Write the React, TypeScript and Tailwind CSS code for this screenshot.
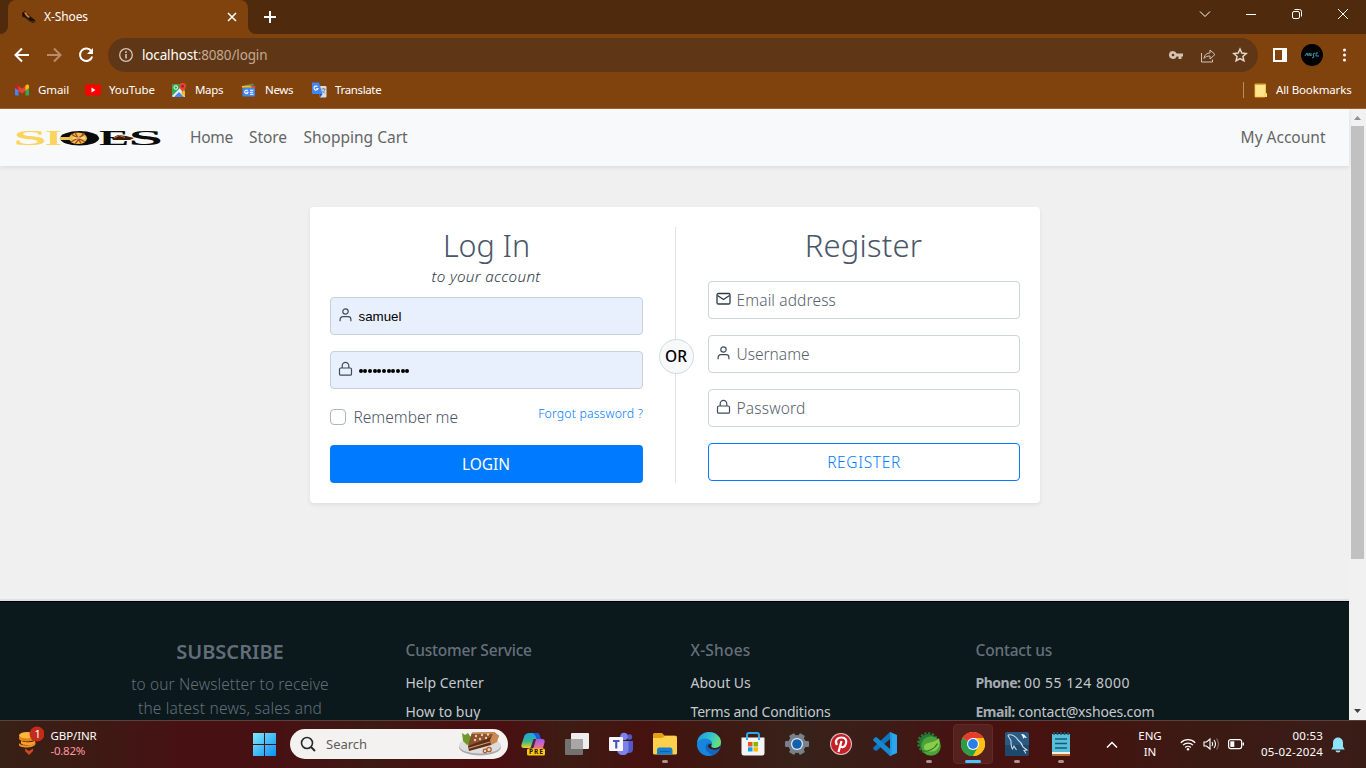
import type { ReactNode } from "react";

function TabStrip() {
  return (
    <div className="flex h-[34px] bg-[#4f2a0c] text-white">
      <div className="flex w-2 items-end bg-[#80430e]">
        <div className="h-full w-2 rounded-br-lg bg-[#4f2a0c]" />
      </div>
      <div className="flex w-[240px] items-center rounded-t-lg bg-[#80430e] pl-[14px] pr-[11px]">
        <svg width="14" height="13" viewBox="0 0 14 13">
          <path d="M0 2l3-2 3 3 3 3 4 3 .500 2-3 1-4-2-3-3-3-1z" fill="#16120f" />
          <path d="M2 1.500l2-.5 1.500 2.500L8 6 6.500 7 4 5z" fill="#d9741c" />
          <path d="M1 6l4 2 4 3 4-.5" stroke="#5d3a20" fill="none" />
        </svg>
        <span className="ml-[8px] grow text-[12px] leading-4 tracking-[-0.1px]">X-Shoes</span>
        <svg width="10" height="10" viewBox="0 0 10 10" stroke="#fff" strokeWidth="1.500">
          <path d="M1 1l8 8M9 1l-8 8" />
        </svg>
      </div>
      <div className="w-2 bg-[#80430e]">
        <div className="h-full w-2 rounded-bl-lg bg-[#4f2a0c]" />
      </div>
      <svg className="ml-[7px] mt-[10px]" width="14" height="14" viewBox="0 0 14 14" stroke="#fff" strokeWidth="2">
        <path d="M7 1v12M1 7h12" />
      </svg>
      <div className="ml-auto flex h-[28px] items-center gap-[34px] pr-[17px]">
        <svg width="12" height="12" viewBox="0 0 12 12" stroke="#fff" fill="none">
          <path d="M1 3.500l5 5 5-5" />
        </svg>
        <svg width="12" height="12" viewBox="0 0 12 12" stroke="#fff" fill="none">
          <path d="M1 6.500h10" />
        </svg>
        <svg width="12" height="12" viewBox="0 0 12 12" stroke="#fff" fill="none">
          <rect x="1.500" y="3.500" width="7" height="7" rx="1.500" />
          <path d="M3.500 1.500h5a2 2 0 0 1 2 2v5" />
        </svg>
        <svg width="12" height="12" viewBox="0 0 12 12" stroke="#fff" fill="none">
          <path d="M1 1l10 10M11 1L1 11" />
        </svg>
      </div>
    </div>
  );
}

function Toolbar() {
  return (
    <div className="flex h-[42px] items-center bg-[#80430e]">
      <svg className="ml-[14px]" width="16" height="16" viewBox="0 0 16 16" stroke="#fff" strokeWidth="2" fill="none">
        <path d="M15 8H2M8 1.500L1.500 8 8 14.500" />
      </svg>
      <svg className="ml-4" width="16" height="16" viewBox="0 0 16 16" stroke="#b98e66" strokeWidth="2" fill="none">
        <path d="M1 8h13M8 1.500L14.500 8 8 14.500" />
      </svg>
      <svg className="ml-4" width="16" height="16" viewBox="0 0 16 16" stroke="#fff" strokeWidth="2" fill="none">
        <path d="M13.300 4.200A6.200 6.200 0 1 0 14.200 9.500" />
        <path d="M15 1v6H9z" fill="#fff" stroke="none" />
      </svg>
      <div className="ml-[14px] flex h-[34px] w-[1150px] items-center rounded-full bg-[#5f3717] pl-[11px] pr-[10px]">
        <svg width="14" height="14" viewBox="0 0 14 14" stroke="#d3c6bb" fill="none">
          <circle cx="7" cy="7" r="6.300" strokeWidth="1.300" />
          <path d="M7 6v4.500M7 3.300v1.600" strokeWidth="1.600" />
        </svg>
        <span className="ml-[9px] text-[13.5px] leading-5 tracking-[-0.15px] text-[#c3a992]">
          <span className="text-white">localhost</span>:8080/login
        </span>
        <svg className="ml-auto" width="14" height="10" viewBox="0 0 14 10" fill="#d3c3b5">
          <path fillRule="evenodd" d="M4 1a4 4 0 1 0 3.700 5.500H9.500V9h3V6.500H14v-3H7.700A4 4 0 0 0 4 1zm0 2.700a1.300 1.300 0 1 1 0 2.600 1.300 1.300 0 0 1 0-2.600z" />
        </svg>
        <svg className="ml-[17px]" width="16" height="15" viewBox="0 0 16 15" stroke="#d3c3b5" fill="none">
          <path d="M1.500 5v9h11v-2.500M4 10.500c.5-4 3-5.500 6-5.500V2l5 4.500-5 4.500V8c-2.500 0-4.500.5-6 2.500z" />
        </svg>
        <svg className="ml-4" width="16" height="16" viewBox="0 0 16 16" stroke="#e3d7cd" strokeWidth="1.500" fill="none">
          <path d="M8 2l1.800 4 4.400.5-3.300 2.900 1 4.300L8 11.500l-3.900 2.200 1-4.300L1.800 6.500 6.200 6z" />
        </svg>
      </div>
      <svg className="ml-[15px]" width="14" height="14" viewBox="0 0 14 14">
        <path fillRule="evenodd" d="M0 0h14v14H0zM2 2v10h7V2z" fill="#fff" />
      </svg>
      <div className="ml-[14px] flex size-[22px] items-center justify-center rounded-full bg-black">
        <svg width="16" height="8" viewBox="0 0 16 8" stroke="#4aa3bd" fill="none" strokeWidth=".9">
          <path d="M1 5l2-3 1 3M5 5V2l2 3V2M11 2l-2 1 1 3-2 1M12 5V2h2M12 5h3" />
        </svg>
      </div>
      <svg className="ml-[19px]" width="4" height="14" viewBox="0 0 4 14" fill="#fff">
        <circle cx="2.500" cy="2" r="1.500" />
        <circle cx="2.500" cy="7" r="1.500" />
        <circle cx="2.500" cy="12" r="1.500" />
      </svg>
    </div>
  );
}

function Bookmark({ icon, children, className }: { icon: ReactNode; children: ReactNode; className: string }) {
  return (
    <div className={`flex shrink-0 items-center ${className}`}>
      {icon}
      <span className="ml-[8px] whitespace-nowrap">{children}</span>
    </div>
  );
}

function Bookmarks() {
  return (
    <div className="flex h-[33px] items-center border-b border-[#9a6233] bg-[#80430e] pb-[4px] pl-[14px] text-[11.5px] text-white">
      <Bookmark
        className="w-[71px] tracking-[-0.1px]"
        icon={
          <svg width="16" height="16" viewBox="0 0 16 16">
            <path d="M1 4v8.500q0 1 1 1h2.500V6.500z" fill="#4285f4" />
            <path d="M15 4v8.500q0 1-1 1h-2.500V6.500z" fill="#34a853" />
            <path d="M4 3.500l4 3.200 4-3.200v5L8 11.500l-4-3z" fill="#ea4335" />
            <path d="M1 4.500C1 2.300 3 2 4.500 3.500v5L1 6z" fill="#c5221f" />
            <path d="M15 4.500c0-2.200-2-2.500-3.500-1v5L15 6z" fill="#fbbc04" />
          </svg>
        }
      >
        Gmail
      </Bookmark>
      <Bookmark
        className="w-[86px] tracking-[-0.1px]"
        icon={
          <svg width="16" height="16" viewBox="0 0 16 16">
            <rect y="2.500" width="16" height="11" rx="2.500" fill="#f00" />
            <path d="M6.500 5.500l4 2.500-4 2.500z" fill="#fff" />
          </svg>
        }
      >
        YouTube
      </Bookmark>
      <Bookmark
        className="w-[70px] tracking-[-0.35px]"
        icon={
          <svg width="16" height="16" viewBox="0 0 16 16">
            <rect x="1" y="2" width="13" height="13" rx="1" fill="#34a853" />
            <path d="M1 14L10 5l4 5v5H2z" fill="#e8eaed" />
            <path d="M3 15l5-5 5 5z" fill="#4285f4" />
            <path d="M13 9l1 1v5l-4-4z" fill="#fbbc04" />
            <circle cx="4.800" cy="5.500" r="1.800" fill="none" stroke="#fff" />
            <path d="M11.500 1A3.300 3.300 0 0 1 15 4.300C15 7 12 8 11.700 11 11.300 8 8.200 7 8.200 4.300A3.300 3.300 0 0 1 11.500 1z" fill="#ea4335" />
            <circle cx="11.600" cy="4.300" r="1.200" fill="#8f2018" />
          </svg>
        }
      >
        Maps
      </Bookmark>
      <Bookmark
        className="w-[70px] tracking-[-0.35px]"
        icon={
          <svg width="16" height="16" viewBox="0 0 16 16">
            <path d="M3 3.500l9-2 1 4.500H3z" fill="#34a853" />
            <path d="M6 3l8.500 1-1 4H5z" fill="#ea4335" />
            <path d="M.5 4l8.500-.5 3 3.500H2z" fill="#fbbc04" />
            <rect x="1.500" y="5.500" width="12.500" height="9" rx="1" fill="#4285f4" />
            <path d="M7 8.300H4.800a1.700 1.700 0 1 0 2.300 1.900H5.300M9 8.300h3.500M9 10.200h3M9 12.200h3.500" stroke="#fff" strokeWidth="1.100" fill="none" />
          </svg>
        }
      >
        News
      </Bookmark>
      <Bookmark
        className="tracking-[-0.35px]"
        icon={
          <svg width="16" height="16" viewBox="0 0 16 16">
            <path d="M6 4h8.500q1 0 1 1v9.500q0 1-1 1H9z" fill="#dadce0" />
            <path d="M1 .5h7L11.500 12H2a1 1 0 0 1-1-1z" fill="#4285f4" />
            <path d="M8 12h3.500L9 15.500z" fill="#1a57c4" />
            <path d="M6.500 4.700A2 2 0 1 0 7 6.500H5.300" stroke="#fff" strokeWidth="1.100" fill="none" />
            <path d="M10.500 7h4M12.500 6v1M14 7c-.5 2-1.500 3-2.500 4M11 8.500l3 3" stroke="#687480" fill="none" strokeWidth=".8" />
          </svg>
        }
      >
        Translate
      </Bookmark>
      <div className="ml-auto mr-[10px] h-4 w-px bg-[#b98e66]" />
      <Bookmark
        className="mr-[14.5px] tracking-[-0.15px]"
        icon={
          <svg width="14" height="15" viewBox="0 0 14 15">
            <path d="M1 1.500h11V10h1v4H1z" fill="#ffe48a" />
            <path d="M1 1h10.500v9M1 1v13h10v-3.500h2" stroke="#efc13c" fill="none" strokeWidth=".8" />
          </svg>
        }
      >
        All Bookmarks
      </Bookmark>
    </div>
  );
}

function Logo() {
  return (
    <svg className="overflow-visible" width="150" height="20" viewBox="0 0 150 20" fontFamily="Liberation Serif, serif" fontWeight="bold" fontSize="21">
      <g fill="#fbd45c">
        <text transform="translate(-1.500 17) scale(2.850 1)">S</text>
        <text transform="translate(30 17) scale(2.100 1)">I</text>
      </g>
      <ellipse cx="64.500" cy="10.300" rx="19.500" ry="7.300" fill="#0b0b0b" />
      <path d="M45 9h13v3H45z" fill="#e9c650" />
      <ellipse cx="63" cy="10.300" rx="9" ry="5.800" fill="#f0bd4c" />
      <path d="M56 6l14 8M56 14l14-8M60 4.500l6 11M69 5l-9 11" stroke="#a34c1a" strokeWidth="1.400" />
      <path d="M58 10h12" stroke="#fff0c5" />
      <g fill="#0b0b0b">
        <text transform="translate(84 17) scale(2.150 1)">E</text>
        <text transform="translate(113.500 17) scale(2.950 1)">S</text>
      </g>
      <path d="M97 10l6-3 8 1 8 2-4 2H98z" fill="#3a1b0c" />
      <path d="M99 10l5-2.500 6 2" stroke="#d0702a" fill="none" />
    </svg>
  );
}

function Navbar() {
  return (
    <nav className="relative flex h-[57px] shrink-0 items-center bg-[#f8f9fa] pl-[15px] pr-[23.5px] text-[15.5px] leading-6 text-[#646566] shadow-[0_2px_4px_rgba(0,0,0,0.075)]">
      <Logo />
      <div className="ml-[25px] flex grow pb-px">
        <a className="w-[59px] tracking-[-0.25px]">Home</a>
        <a className="w-[54.5px] tracking-[-0.05px]">Store</a>
        <a>Shopping Cart</a>
        <a className="ml-auto">My Account</a>
      </div>
    </nav>
  );
}

const UserIcon = () => (
  <svg width="16" height="16" viewBox="0 0 16 16" stroke="#3e4b5b" strokeWidth="1.200" fill="none">
    <circle cx="7.500" cy="4.500" r="2.700" />
    <path d="M2.100 14.200v-1.700a2.800 2.800 0 0 1 2.800-2.800h5.200a2.800 2.800 0 0 1 2.800 2.800v1.700" />
  </svg>
);

const LockIcon = () => (
  <svg width="16" height="16" viewBox="0 0 16 16" stroke="#3e4b5b" strokeWidth="1.200" fill="none">
    <rect x="1.500" y="7" width="12" height="7.200" rx="1.300" />
    <path d="M4.200 7V4.700a3.300 3.300 0 0 1 6.600 0V7" />
  </svg>
);

const MailIcon = () => (
  <svg width="16" height="16" viewBox="0 0 16 16" stroke="#2c3a4c" strokeWidth="1.300" fill="none">
    <rect x="1" y="2.500" width="13" height="10.500" rx="1.300" />
    <path d="M1.500 4.500l6 4 6-4" />
  </svg>
);

function Field({ icon, children, filled }: { icon: ReactNode; children: ReactNode; filled?: boolean }) {
  return (
    <div
      className={`mb-4 flex h-[38px] items-center rounded-[4px] border pl-[7px] ${
        filled ? "border-[#c9cfdb] bg-[#e8f0fe]" : "border-[#ced4da] bg-white"
      }`}
    >
      <span className="pb-[3px]">{icon}</span>
      <span className="ml-[4.5px] flex items-center">{children}</span>
    </div>
  );
}

function LoginForm() {
  return (
    <div className="flex w-[313px] flex-col">
      <h2 className="h-[37px] text-center text-[30.5px] font-[330] leading-[36px] tracking-[-0.1px] text-[#4a5568]">Log In</h2>
      <p className="h-[33px] pr-px text-center text-[15.2px] font-[330] italic leading-[25px] tracking-[0.35px] text-[#2d3748]">to your account</p>
      <Field filled icon={<UserIcon />}>
        <span className="pt-px font-['Liberation_Sans',sans-serif] text-[13.33px] leading-5 text-black">samuel</span>
      </Field>
      <Field filled icon={<LockIcon />}>
        <span className="flex gap-[0.7px] pt-px">
          {Array.from({ length: 11 }, (_, i) => (
            <i key={i} className="size-[4px] rounded-full bg-black" />
          ))}
        </span>
      </Field>
      <div className="flex h-[40px] items-start">
        <span className="mt-[4px] size-4 rounded-[4px] border border-[#adb5bd] bg-white" />
        <span className="ml-[7.5px] text-[15.5px] font-[350] leading-6 tracking-[0px] text-[#4a5568]">Remember me</span>
        <a className="ml-auto text-[12.3px] font-[350] leading-[18px] tracking-[0.14px] text-[#007bff]">Forgot password ?</a>
      </div>
      <button className="h-[38px] rounded-[4px] bg-[#007bff] pr-px text-[15.5px] leading-[37px] text-white">LOGIN</button>
    </div>
  );
}

function Divider() {
  return (
    <div className="relative h-[256px] w-[65px]">
      <div className="ml-[32px] h-full w-px bg-[#dee2e6]" />
      <div className="absolute left-[16px] top-[112px] flex size-[35px] items-center justify-center rounded-full border border-[#d5d9dd] bg-[#f8f9fa] pr-px text-[15.5px] font-medium tracking-[0.1px] text-black">
        OR
      </div>
    </div>
  );
}

function RegisterForm() {
  const text = "text-[15.5px] font-[350] leading-6 text-[#56606b]";
  return (
    <div className="flex w-[312px] flex-col">
      <h2 className="h-[54px] pr-px text-center text-[31px] font-[330] leading-[36px] tracking-[0.2px] text-[#4a5568]">Register</h2>
      <Field icon={<MailIcon />}>
        <span className={`${text} pb-px tracking-[0.13px]`}>Email address</span>
      </Field>
      <Field icon={<UserIcon />}>
        <span className={`${text} pb-px`}>Username</span>
      </Field>
      <Field icon={<LockIcon />}>
        <span className={`${text} pb-px tracking-[0.18px]`}>Password</span>
      </Field>
      <button className="h-[38px] rounded-[4px] border border-[#007bff] text-[15.5px] font-[350] leading-[34px] tracking-[0.65px] text-[#007bff]">
        REGISTER
      </button>
    </div>
  );
}

function Footer() {
  const heading = "text-[15.5px] font-medium leading-6 text-[#66707a]";
  const link = "text-[14px] leading-[29px] text-[#c5c9cc]";
  return (
    <footer className="mt-auto h-[121px] shrink-0 border-t-2 border-[#d9e2e4] bg-[#0b181c]">
      <div className="flex h-full border-t border-black">
        <div className="ml-[119.5px] w-[221px] pt-[35px] text-center text-[#636e78]">
          <h5 className="text-[20px] font-semibold leading-[29px] tracking-[0px] text-[#636d78]">SUBSCRIBE</h5>
          <p className="pt-[6px] text-[15.5px] font-[350] leading-6 tracking-[0.1px]">to our Newsletter to receive</p>
          <p className="text-[15.5px] font-[350] leading-6 tracking-[0.2px]">the latest news, sales and</p>
        </div>
        <div className="ml-[65px] w-[285px] pt-[35.5px]">
          <h6 className={`${heading} tracking-[-0.2px]`}>Customer Service</h6>
          <div className="pt-[6.5px]">
            <p className={link}>Help Center</p>
            <p className={link}>How to buy</p>
          </div>
        </div>
        <div className="w-[285px] pt-[35.5px]">
          <h6 className={`${heading} tracking-[0.2px]`}>X-Shoes</h6>
          <div className="pt-[6.5px]">
            <p className={link}>About Us</p>
            <p className={`${link} tracking-[-0.17px]`}>Terms and Conditions</p>
          </div>
        </div>
        <div className="w-[285px] pt-[35.5px]">
          <h6 className={`${heading} tracking-[-0.2px]`}>Contact us</h6>
          <div className="pt-[6.5px]">
            <p className={link}>
              <b className="tracking-[-0.5px] text-[#a5abb0]">Phone:</b>
              <span className="ml-[3.5px] tracking-[0.5px]">00 55 124 8000</span>
            </p>
            <p className={link}>
              <b className="tracking-[-0.5px] text-[#a5abb0]">Email:</b>
              <span className="ml-[3.5px] tracking-[-0.15px]">contact@xshoes.com</span>
            </p>
          </div>
        </div>
      </div>
    </footer>
  );
}

function Scrollbar() {
  return (
    <div className="flex w-[17px] flex-col items-center bg-[#f1f1f1]">
      <svg width="17" height="17" viewBox="0 0 17 17">
        <path d="M5 11h7L8.500 7z" fill="#8f8f8f" />
      </svg>
      <div className="h-[433px] w-[13px] bg-[#c1c1c1]" />
      <svg className="mt-auto" width="17" height="17" viewBox="0 0 17 17">
        <path d="M5 6h7l-3.500 4z" fill="#404040" />
      </svg>
    </div>
  );
}

function Slot({ children, state }: { children: ReactNode; state?: "open" | "active" }) {
  return (
    <div className={`flex h-[40px] w-[40px] flex-col items-center rounded-[4px] ${state === "active" ? "border border-[#5f2b27] bg-[#54211f] pt-[7px]" : "pt-2"}`}>
      <svg width="24" height="24" viewBox="0 0 24 24">
        {children}
      </svg>
      {state === "open" && <i className="mt-[4px] h-[3px] w-[6px] rounded-full bg-[#a8928e]" />}
      {state === "active" && <i className="mt-[4px] h-[3px] w-4 rounded-full bg-[#4cc2ff]" />}
    </div>
  );
}

function TaskIcons() {
  return (
    <div className="ml-[5px] flex gap-1">
      <Slot>
        <defs>
          <linearGradient id="cpA" x1="0" y1="0" x2="0" y2="1">
            <stop stopColor="#1ba5e8" />
            <stop offset=".55" stopColor="#37b58f" />
            <stop offset="1" stopColor="#eed321" />
          </linearGradient>
          <linearGradient id="cpB" x1="0" y1="0" x2="0" y2="1">
            <stop stopColor="#a457f5" />
            <stop offset="1" stopColor="#ff7b6b" />
          </linearGradient>
        </defs>
        <path d="M15 7h6c2.500 0 3 1.500 2.500 3.500L22 16c-.5 1.500-1.500 2-3 2h-8z" fill="url(#cpB)" />
        <path d="M8 1h8c2 0 2.500 2 3 4l.7 2h-4.200c-2 0-3 3-4 6-.5 2-1 3-2.500 3H3c-2.500 0-3-1.500-2.500-3.500l3-9C4.500 2 6 1 8 1z" fill="url(#cpA)" />
        <path d="M12 1h4c2 0 2.500 2 3 4l.7 2h-4.200l-1-3z" fill="#1b5bd5" />
        <path d="M12.500 7h2.500l-2.500 9H9.500z" fill="#4a2a4a" />
        <rect x="6" y="16.500" width="18" height="7" rx="1.500" fill="#ffc814" />
        <text x="8" y="22.300" fontFamily="Noto Sans, sans-serif" fontSize="6.500" fontWeight="bold" fill="#1d1608" textLength="14">PRE</text>
      </Slot>
      <Slot>
        <rect x="6" y="1" width="18" height="16" rx="1" fill="#eee" />
        <rect x="0" y="7" width="18" height="16" rx="1" fill="#737271" />
        <path d="M6 7h12v10H6z" fill="#a9a7a6" />
      </Slot>
      <Slot>
        <circle cx="20.500" cy="5" r="2.700" fill="#5059c9" />
        <path d="M16 9h8v8a4 4 0 0 1-4 4h-3z" fill="#5059c9" />
        <circle cx="15" cy="4.500" r="3.800" fill="#7b83eb" />
        <path d="M8 9h11.500v8c0 4-2 6-5.500 6s-6-2-6-6z" fill="#7b83eb" />
        <rect x="0" y="5" width="14" height="14" rx="1" fill="#f7f7fb" />
        <path d="M4 8h6.500v2H8.300v6.500H6.200V10H4z" fill="#4b53bc" />
      </Slot>
      <Slot state="open">
        <path d="M0 2.500Q0 1 1.500 1H9l2.500 2.500H22Q24 3.500 24 5v5H0z" fill="#e0a112" />
        <path d="M0 6h9l3-2h10q2 0 2 2v15.500q0 1-1.500 1H1.500Q0 22.500 0 21z" fill="#fcd04c" />
        <path d="M4 22.500V18q0-2.500 2-2.500h11.500q2 0 2 2.500v4.500z" fill="#1580d0" />
        <path d="M7 19.500h10" stroke="#0c5fa6" />
      </Slot>
      <Slot>
        <defs>
          <linearGradient id="edgeTop" x1="0" x2="1" y1="0" y2=".4">
            <stop stopColor="#1697e0" />
            <stop offset=".6" stopColor="#36c2cf" />
            <stop offset="1" stopColor="#64e07b" />
          </linearGradient>
        </defs>
        <circle cx="12" cy="12" r="12" fill="#1267bd" />
        <path d="M0 11C1 4 6 0 12 0c7 0 12 5 12 10 0 4-3 6-6 6-2.500 0-4-1-3.500-2.500C16 11 14 7 9 7c-4 0-8 2-9 4z" fill="url(#edgeTop)" />
        <path d="M0 12c.5-3 4-5.500 8-5.500 5 0 7 4 6.500 6-1-2-6-2-6 2.500 0 4 3.500 6.500 7 8C7 26 0 20 0 12z" fill="#1686dc" />
        <path d="M14.500 12.500c-.7 1.500-1 3.500 3.500 3.500 2 0 4-.7 5.300-2 .3 1-.3 2-1.300 2.800-5 2-11 .2-11-2.800.5-2 2.500-2.500 3.500-1.500z" fill="#3b1b18" />
      </Slot>
      <Slot>
        <path d="M6 6V3q0-2 2-2h8q2 0 2 2v3" stroke="#29a8ec" strokeWidth="2" fill="none" />
        <path d="M.5 5.500h23V21q0 2.500-2.500 2.500H3Q.5 23.500.5 21z" fill="#f4f4f6" />
        <path d="M7 10h4.500v4.500H7z" fill="#f25022" />
        <path d="M12.500 10H17v4.500h-4.500z" fill="#7fba00" />
        <path d="M7 15.300h4.500v4.200H7z" fill="#00a4ef" />
        <path d="M12.500 15.300H17v4.200h-4.500z" fill="#ffb900" />
        <path d="M6 5.500V8M18 5.500V8" stroke="#29a8ec" strokeWidth="2" />
      </Slot>
      <Slot>
        <g fill="#78818b">
          <circle cx="12" cy="12" r="9" />
          <rect x="9" y="1" width="6" height="22" rx="1" transform="rotate(30 12 12)" />
          <rect x="9" y="0" width="6" height="24" rx="1" transform="rotate(90 12 12)" />
          <rect x="9" y="1" width="6" height="22" rx="1" transform="rotate(150 12 12)" />
        </g>
        <circle cx="12" cy="12" r="6" fill="#e6f0f8" />
        <circle cx="12" cy="12" r="4.800" fill="#1261ad" />
      </Slot>
      <Slot>
        <circle cx="12" cy="12" r="11" fill="#d9c4c1" />
        <circle cx="12" cy="12" r="10" fill="#c51f28" />
        <path d="M8 13C5 8 9 5.500 12.500 5.500c4 0 5.500 3 4.500 6-1 4-4.500 4.500-5.500 2.500M12.500 9L9.500 20" stroke="#fff" strokeWidth="2.200" fill="none" />
      </Slot>
      <Slot>
        <path d="M17 0l7 3v18l-7 3z" fill="#2aa5ef" />
        <path d="M17 0v7L4 18.500q-1 .7-2 0l-1.500-1.500q-.7-1 0-1.700z" fill="#0f75bd" />
        <path d="M17 24v-7L4 5.500q-1-.7-2 0L.5 7q-.7 1 0 1.700z" fill="#1389d3" />
        <path d="M17 0l2 1v22l-2 1z" fill="#2196dc" />
      </Slot>
      <Slot state="open">
        <circle cx="11" cy="11" r="9" fill="#237c3a" />
        <circle cx="11" cy="11" r="9.700" fill="none" stroke="#237c3a" strokeWidth="2.400" strokeDasharray="2.200 1.600" />
        <circle cx="14" cy="14" r="9.800" fill="#49a336" />
        <path d="M22 6c1.500 6 0 13.500-7.500 13.500-4 0-7.500-1-7.500-4C7 9 18 12 22 6z" fill="#8bcb4c" />
        <path d="M5 19.500c7 0 12.500-2 15.500-8" stroke="#2b7e30" strokeWidth="1.300" fill="none" />
      </Slot>
      <Slot state="active">
        <circle cx="12" cy="12" r="12" fill="#fbc116" />
        <path d="M12 12L1.600 6A12 12 0 0 1 22.400 6z" fill="#e63c2e" />
        <path d="M12 12L1.600 6A12 12 0 0 0 12 24l5.200-9z" fill="#2a9d4b" />
        <path d="M12 6h10.400A12 12 0 0 1 12 24l5.200-9z" fill="#fbc116" />
        <circle cx="12" cy="12" r="6" fill="#fff" />
        <circle cx="12" cy="12" r="4.900" fill="#2b7de9" />
      </Slot>
      <Slot state="open">
        <rect width="24" height="24" rx="2" fill="#285a83" />
        <path d="M0 13h24v9q0 2-2 2H2q-2 0-2-2z" fill="#1e486c" />
        <path d="M3 3c5-1 8 2 10 5 3 2 4 4 5 7l4 3-3 .5 2 3M3 3c0 2 2 3 3 6 0 4 0 6 1.500 8l1.500-3 2.500 4" stroke="#cadbe7" strokeWidth="1.100" fill="none" />
        <path d="M16 2l3 .5L22 6l-3-.5-1 1.500-.3-2.500z" fill="#fff" />
      </Slot>
      <Slot state="open">
        <path d="M3 2h18v18H3z" fill="#59bfd9" />
        <path d="M3 20h18v2H3z" fill="#f4f0e8" />
        <path d="M3 22h18v2H3z" fill="#b96b28" />
        <path d="M5 0v3M8.500 0v3M12 0v3M15.500 0v3M19 0v3" stroke="#145b75" strokeWidth="1.500" />
        <path d="M6 7h12M6 11.500h12M6 16h12" stroke="#145b75" strokeWidth="1.700" />
      </Slot>
    </div>
  );
}

function Taskbar() {
  return (
    <div className="flex h-[48px] items-start border-t border-[#5b403b] bg-[linear-gradient(90deg,#372117_0px,#3d1a14_90px,#471113_180px,#471113_280px,#3d1a14_370px,#4a0f11_470px,#4a0f11_500px,#3d1c14_565px,#46120f_640px,#3e1913_720px,#37221a_800px,#3c1c16_880px,#461212_960px,#45130f_1060px,#3c1a14_1200px,#3a1c16_1366px)] text-white">
      <div className="flex w-[253px] pl-[19px] pt-[5px]">
        <svg width="25" height="30" viewBox="0 0 25 30">
          <ellipse cx="8" cy="9.500" rx="8" ry="3.500" fill="#ffb53b" />
          <path d="M0 9.500v3c0 4 16 4 16 0v-3c0 4-16 4-16 0z" fill="#e8820e" />
          <path d="M2 14v3c0 3 14 3 14 0v-3c0 3-14 3-14 0z" fill="#f9a02a" />
          <path d="M0 16.500c0 4 16.500 4 16.500-1v2c0 5-16.500 5-16.500 1.500z" fill="#f0922a" />
          <path d="M6 22.500l4 2.500 4-2.500v2.500L10 29l-4-4z" fill="#d2491c" />
          <circle cx="18" cy="8" r="7.500" fill="#c42b1c" />
          <text x="15.500" y="12" fontFamily="Noto Sans, sans-serif" fontSize="11" fill="#fff">1</text>
        </svg>
        <div className="ml-[6.500px] text-[11.5px] leading-4">
          <p className="pt-[2px] leading-[15px] tracking-[-0.1px]">GBP/INR</p>
          <p className="tracking-[-0.25px] text-[#ff99a4]">-0.82%</p>
        </div>
      </div>
      <svg className="mt-[12px]" width="23" height="23" viewBox="0 0 23 23">
        <defs>
          <linearGradient id="win" x1="0" y1="0" x2="1" y2="1">
            <stop stopColor="#7eebfb" />
            <stop offset="1" stopColor="#0a8ef5" />
          </linearGradient>
        </defs>
        <path d="M0 0h11v11H0zM12 0h11v11H12zM0 12h11v11H0zM12 12h11v11H12z" fill="url(#win)" />
      </svg>
      <div className="ml-[14px] mt-[8px] flex h-[30px] w-[218px] items-center rounded-full bg-[#f4f2f1] pl-[10px] pr-[5px]">
        <svg width="16" height="16" viewBox="0 0 16 16" stroke="#26292e" fill="none">
          <circle cx="7" cy="7" r="5.500" strokeWidth="1.600" />
          <path d="M11 11l4 4" strokeWidth="2" />
        </svg>
        <span className="ml-[10px] text-[13px] leading-5 text-[#5c5c5c]">Search</span>
        <svg className="ml-auto" width="45" height="26" viewBox="0 0 45 26">
          <ellipse cx="22" cy="16" rx="21" ry="8.500" fill="#aaa9ae" />
          <ellipse cx="22" cy="14.500" rx="21" ry="8" fill="#dedcdf" />
          <path d="M4 2l3 2 3-2 2 3 2 1-1 6-4 2-4-4z" fill="#6f9a2a" />
          <path d="M14 2l22-1 5 4-8 9-22 6-1-4z" fill="#5a2d19" />
          <path d="M14 2l22-1 3 3-29 11z" fill="#8a5230" />
          <path d="M36 1l5 4-2 6-6 3-1-5z" fill="#c98b51" />
          <path d="M10 17.500l22-6.500M14 2h22" stroke="#d39a62" strokeWidth="1.300" />
          <g fill="#efc99b">
            <circle cx="18" cy="5" r="1.200" />
            <circle cx="24" cy="4" r="1.200" />
            <circle cx="30" cy="3.500" r="1.200" />
            <circle cx="17" cy="9" r="1.200" />
            <circle cx="22" cy="8" r="1.200" />
            <circle cx="28" cy="7" r="1.200" />
          </g>
          <circle cx="27" cy="20" r="1.800" fill="none" stroke="#b05f22" strokeWidth="1.300" />
          <circle cx="31" cy="18.500" r="2.200" fill="none" stroke="#b05f22" strokeWidth="1.300" />
        </svg>
      </div>
      <div className="mt-[3px]">
        <TaskIcons />
      </div>
      <div className="ml-[25px] flex h-[47px] grow items-center">
        <svg width="12" height="8" viewBox="0 0 12 8" stroke="#fff" strokeWidth="1.500" fill="none">
          <path d="M1 6.500l5-5 5 5" />
        </svg>
        <div className="ml-[16px] w-[32px] pb-px text-center text-[11.5px] leading-4">
          <p>ENG</p>
          <p>IN</p>
        </div>
        <svg className="ml-[14px]" width="16" height="14" viewBox="0 0 16 14" stroke="#fff" strokeWidth="1.200" fill="none">
          <path d="M.8 4.700a10.200 10.200 0 0 1 14.400 0M3 7.200a7 7 0 0 1 10 0M5.200 9.500a4 4 0 0 1 5.600 0" />
          <circle cx="8" cy="11.200" r="1.200" fill="#fff" stroke="none" />
        </svg>
        <svg className="ml-[7px] mb-px" width="17" height="14" viewBox="0 0 17 14" stroke="#fff" strokeWidth="1.100" fill="none">
          <path d="M1 5v4h2.500L7 12V2L3.500 5zM9 5q1.500 2 0 4M11 3q3 4 0 8" />
          <path d="M13.500 1.500q4 5.500 0 11" stroke="#876e69" />
        </svg>
        <svg className="ml-[8px] mb-px" width="16" height="12" viewBox="0 0 16 12">
          <rect x=".6" y="1.600" width="13" height="9" rx="2" fill="none" stroke="#fff" strokeWidth="1.200" />
          <rect x="2.300" y="3.300" width="4" height="5.600" fill="#fff" />
          <path d="M14.500 4.500H16v3h-1.500z" fill="#fff" />
        </svg>
        <div className="ml-auto pb-[2px] text-right text-[11.5px] leading-4 tracking-[0.2px]">
          <p>00:53</p>
          <p>05-02-2024</p>
        </div>
        <svg className="ml-[8px] mr-[21px]" width="14" height="16" viewBox="0 0 14 16" fill="#8ee3fb">
          <path d="M7 .5a5 5 0 0 1 5 5v4l1.700 3H.3L2 9.500v-4a5 5 0 0 1 5-5z" />
          <path d="M4.500 13.500h5a2.500 2 0 0 1-5 0z" />
        </svg>
      </div>
    </div>
  );
}

export default function App() {
  return (
    <div className="flex h-[768px] w-[1366px] flex-col overflow-hidden font-['Noto_Sans','Open_Sans',sans-serif]">
      <TabStrip />
      <Toolbar />
      <Bookmarks />
      <div className="flex h-[611px] overflow-hidden">
        <div className="flex h-[611px] w-[1349px] flex-col bg-[#f0f0f0]">
          <Navbar />
          <div className="ml-[310px] mt-[41px] flex h-[296px] w-[730px] rounded-[4px] bg-white p-5 shadow-[0_2px_4px_rgba(0,0,0,0.075)]">
            <LoginForm />
            <Divider />
            <RegisterForm />
          </div>
          <Footer />
        </div>
        <Scrollbar />
      </div>
      <Taskbar />
    </div>
  );
}
